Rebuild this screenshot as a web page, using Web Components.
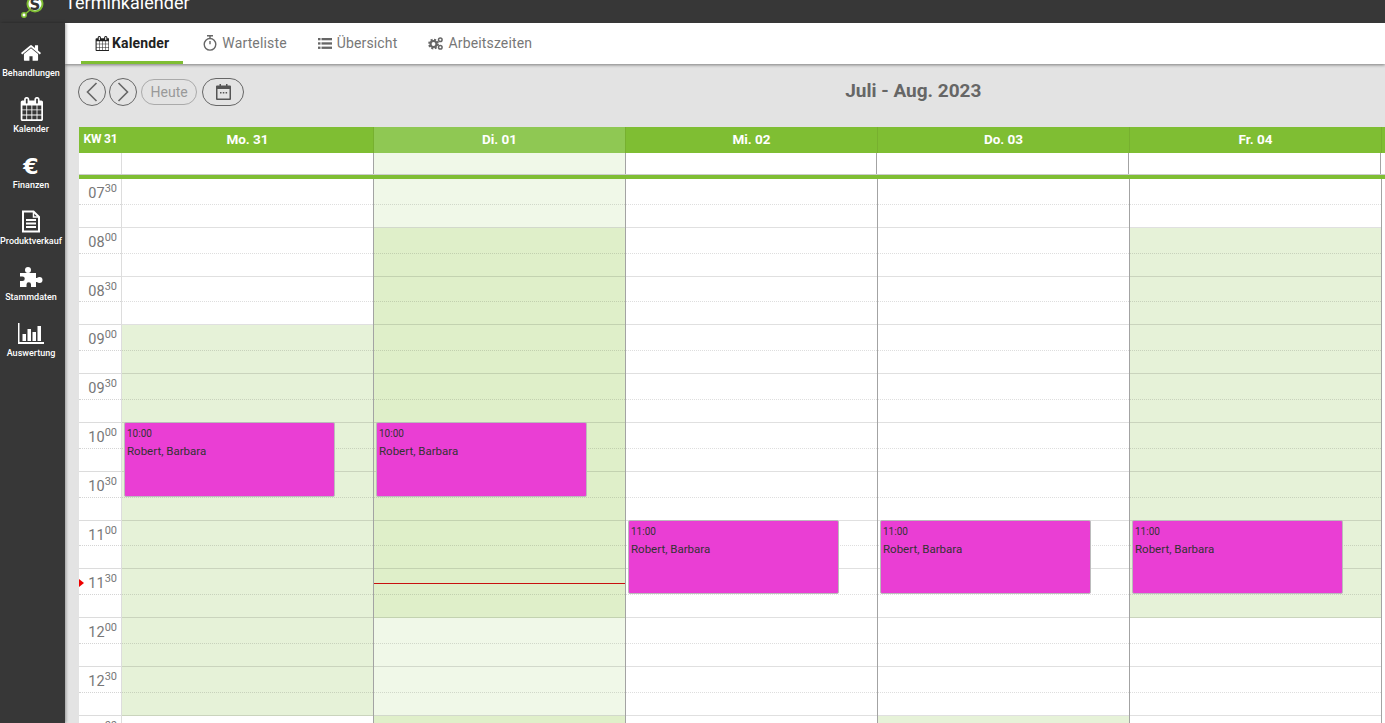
<!DOCTYPE html>
<html lang="de">
<head>
<meta charset="utf-8">
<title>Terminkalender</title>
<style>
  html, body { margin: 0; height: 100%; overflow: hidden; background: #e3e3e3; font-family: Roboto, "Liberation Sans", sans-serif; }
</style>
</head>
<body>
<app-shell></app-shell>
<script>
const CAL_PATH = 'M192 1664h288v-288h-288v288zm352 0h320v-288h-320v288zm-352-352h288v-320h-288v320zm352 0h320v-320h-320v320zm-352-384h288v-288h-288v288zm736 736h320v-288h-320v288zm-384-736h320v-288h-320v288zm768 736h288v-288h-288v288zm-384-352h320v-320h-320v320zm-352-864v-288q0-13-9.5-22.5t-22.5-9.5h-64q-13 0-22.5 9.5t-9.5 22.5v288q0 13 9.5 22.5t22.5 9.5h64q13 0 22.5-9.5t9.5-22.5zm736 864h288v-320h-288v320zm-384-384h320v-288h-320v288zm384 0h288v-288h-288v288zm32-480v-288q0-13-9.5-22.5t-22.5-9.5h-64q-13 0-22.5 9.5t-9.5 22.5v288q0 13 9.5 22.5t22.5 9.5h64q13 0 22.5-9.5t9.5-22.5zm384-64v1280q0 52-38 90t-90 38h-1408q-52 0-90-38t-38-90v-1280q0-52 38-90t90-38h128v-96q0-66 47-113t113-47h64q66 0 113 47t47 113v96h384v-96q0-66 47-113t113-47h64q66 0 113 47t47 113v96h128q52 0 90 38t38 90z';

const ICONS = {
  home: `<svg width="22" height="22" viewBox="0 0 1792 1792" fill="#fff"><path d="M1472 992v480q0 26-19 45t-45 19h-384v-384h-256v384h-384q-26 0-45-19t-19-45v-480q0-1 .5-3t.5-3l575-474 575 474q1 2 1 6zm223-69l-62 74q-8 9-21 11h-3q-13 0-21-7l-692-577-692 577q-12 8-24 7-13-2-21-11l-62-74q-8-10-7-23.5t11-21.5l719-599q32-26 76-26t76 26l244 204v-195q0-14 9-23t23-9h192q14 0 23 9t9 23v408l219 182q10 8 11 21.5t-7 23.5z"/></svg>`,
  calendar: `<svg width="24" height="24" viewBox="0 0 1664 1792" fill="#fff"><path d="${CAL_PATH}"/></svg>`,
  euro: `<span style="font:700 22px/22px 'DejaVu Sans',sans-serif;color:#fff">€</span>`,
  doc: `<svg width="20" height="23" viewBox="0 0 20 23" fill="none" stroke="#fff" stroke-width="2"><path d="M2 1.5h10.5l5.5 5.5v14.500h-16z"/><path d="M12.500 1.500v5.500h5.500" stroke-width="1.500"/><path d="M5 10h10M5 13.500h10M5 17h10" stroke-width="2"/></svg>`,
  puzzle: `<svg width="23" height="21" viewBox="0 0 23 21" fill="#fff"><circle cx="8" cy="3" r="3"/><path d="M0 6h16v5h3v4h-3v5h-5v-2.500a2.200 2.200 0 0 0-4.500 0v2.500h-6.500v-6h2.500a2.200 2.200 0 0 0 0-4.500h-2.500z"/><circle cx="19.500" cy="13" r="3"/></svg>`,
  chart: `<svg width="26" height="21" viewBox="0 0 26 21" fill="#fff"><path d="M0 0h1.500v19h24.500v2h-26z"/><rect x="4.500" y="11" width="3.500" height="7"/><rect x="9.500" y="6" width="3.500" height="12"/><rect x="14.500" y="9" width="3.500" height="9"/><rect x="19.500" y="3" width="3.500" height="15"/></svg>`
};

const TAB_ICONS = {
  calendar: `<svg width="14" height="15" viewBox="0 0 1664 1792" fill="#222"><path d="${CAL_PATH}"/></svg>`,
  watch: `<svg width="14" height="16" viewBox="0 0 14 16" fill="none" stroke="#666" stroke-width="1.400"><path d="M4 .8h6M7 .8v2.500"/><circle cx="7" cy="9.300" r="5.800"/><path d="M7 9.300v-3.300"/></svg>`,
  list: `<svg width="14" height="11" viewBox="0 0 14 11" fill="#666"><rect y="0" width="2.500" height="2.300"/><rect x="3.500" y="0" width="10.500" height="2.300"/><rect y="4.300" width="2.500" height="2.300"/><rect x="3.500" y="4.300" width="10.500" height="2.300"/><rect y="8.600" width="2.500" height="2.300"/><rect x="3.500" y="8.600" width="10.500" height="2.300"/></svg>`,
  cogs: `<svg width="15" height="13" viewBox="0 0 15 13" fill="none" stroke="#666"><circle cx="5.500" cy="7" r="4.200" stroke-width="2.400" stroke-dasharray="1.900 1.400"/><circle cx="5.500" cy="7" r="3" stroke-width="2.200"/><circle cx="12.300" cy="2.800" r="1.800" stroke-width="1.500"/><circle cx="12.300" cy="10.200" r="1.800" stroke-width="1.500"/></svg>`
};

class AppShell extends HTMLElement {
  constructor() {
    super();
    this.attachShadow({ mode: 'open' });
    this.shadowRoot.innerHTML = `
      <style>
        :host { display: flex; flex-direction: column; height: 723px; overflow: hidden; }
        .body { display: flex; flex: 1; min-height: 0; }
        .main { flex: 1; min-width: 0; display: flex; flex-direction: column; overflow: hidden; }
      </style>
      <top-bar></top-bar>
      <div class="body">
        <app-sidebar></app-sidebar>
        <div class="main">
          <cal-tabs></cal-tabs>
          <cal-toolbar></cal-toolbar>
          <cal-grid></cal-grid>
        </div>
      </div>`;
  }
}

class TopBar extends HTMLElement {
  constructor() {
    super();
    this.attachShadow({ mode: 'open' });
    this.shadowRoot.innerHTML = `
      <style>
        :host { display: flex; height: 23px; background: #373737; overflow: hidden; flex: none; }
        .logo { width: 65px; flex: none; }
        svg { display: block; }
        h1 { margin: -8px 0 0; font: 400 18px/22px Roboto, sans-serif; color: #fff; letter-spacing: .04px; }
      </style>
      <div class="logo">
        <svg width="65" height="23" viewBox="0 0 65 23">
          <path d="M24 15L30 10" stroke="#7fbe33" stroke-width="1.500"/>
          <circle cx="35" cy="4" r="7.500" fill="#fff" stroke="#7fbe33" stroke-width="2"/>
          <text x="35" y="9.500" text-anchor="middle" font-family="'DejaVu Sans',sans-serif" font-weight="700" font-size="15" fill="#333">S</text>
          <circle cx="24" cy="15" r="2.200" fill="#fff" stroke="#7fbe33" stroke-width="1.500"/>
        </svg>
      </div>
      <h1>Terminkalender</h1>`;
  }
}

class NavItem extends HTMLElement {
  constructor() {
    super();
    this.attachShadow({ mode: 'open' });
    this.shadowRoot.innerHTML = `
      <style>
        :host { display: flex; flex-direction: column; align-items: center; width: 62px; height: 56px; color: #fff; }
        .icon { height: 24px; margin-top: 2px; display: flex; align-items: center; justify-content: center; }
        .icon svg { display: block; }
        .label { font: 500 9px/11px Roboto, sans-serif; margin-top: 1px; white-space: nowrap; }
      </style>
      <div class="icon"><slot name="icon"></slot></div>
      <div class="label"><slot></slot></div>`;
  }
}

class AppSidebar extends HTMLElement {
  constructor() {
    super();
    this.attachShadow({ mode: 'open' });
    const items = [['home', 'Behandlungen'], ['calendar', 'Kalender'], ['euro', 'Finanzen'], ['doc', 'Produktverkauf'], ['puzzle', 'Stammdaten'], ['chart', 'Auswertung']];
    this.shadowRoot.innerHTML = `
      <style>
        :host { display: block; width: 65px; flex: none; background: #373737; padding-top: 18px; box-sizing: border-box; box-shadow: 1px 0 3px rgba(0,0,0,.35); position: relative; z-index: 2; }
      </style>
      ${items.map(([icon, label]) => `<nav-item><span slot="icon">${ICONS[icon]}</span>${label}</nav-item>`).join('')}`;
  }
}

class TabItem extends HTMLElement {
  constructor() {
    super();
    this.attachShadow({ mode: 'open' });
    this.shadowRoot.innerHTML = `
      <style>
        :host { display: flex; align-items: center; gap: 5px; height: 41px; box-sizing: border-box; padding: 2px 14px 0; border-bottom: 3px solid transparent; font: 400 14px Roboto, sans-serif; color: #777; letter-spacing: .15px; }
        :host([active]) { border-bottom-color: #7fbe33; font-weight: 700; color: #222; gap: 3px; margin-right: 3px; }
        ::slotted(svg) { display: block; }
      </style>
      <slot></slot>`;
  }
}

class CalTabs extends HTMLElement {
  constructor() {
    super();
    this.attachShadow({ mode: 'open' });
    this.shadowRoot.innerHTML = `
      <style>
        :host { display: flex; flex: none; height: 41px; background: #fff; padding-left: 16px; gap: 3px; box-shadow: 0 1px 3px rgba(0,0,0,.45); position: relative; z-index: 1; }
      </style>
      <tab-item active>${TAB_ICONS.calendar}Kalender</tab-item>
      <tab-item>${TAB_ICONS.watch}Warteliste</tab-item>
      <tab-item>${TAB_ICONS.list}Übersicht</tab-item>
      <tab-item>${TAB_ICONS.cogs}Arbeitszeiten</tab-item>`;
  }
}

class RoundButton extends HTMLElement {
  constructor() {
    super();
    this.attachShadow({ mode: 'open' });
    this.shadowRoot.innerHTML = `
      <style>
        :host { display: flex; align-items: center; justify-content: center; box-sizing: border-box; height: 28px; min-width: 28px; border: 1px solid #666; border-radius: 14px; color: #666; font: 400 14px Roboto, sans-serif; }
        :host([disabled]) { height: 26px; border-color: #aaa; color: #999; padding: 0 8.500px; border-radius: 13px; }
        :host([wide]) { width: 42px; }
        ::slotted(svg) { display: block; }
      </style>
      <slot></slot>`;
  }
}

class CalToolbar extends HTMLElement {
  constructor() {
    super();
    this.attachShadow({ mode: 'open' });
    this.shadowRoot.innerHTML = `
      <style>
        :host { display: flex; flex: none; align-items: center; height: 63px; box-sizing: border-box; padding: 0 0 7px 13px; gap: 3px; }
        h2 { margin: -4px 0 0 598px; font: 700 19px Roboto, sans-serif; color: #666; white-space: nowrap; }
      </style>
      <round-button><svg width="12" height="20" viewBox="0 0 12 20" fill="none" stroke="#666" stroke-width="1.600"><path d="M10.500 1L1.500 10l9 9"/></svg></round-button>
      <round-button><svg width="12" height="20" viewBox="0 0 12 20" fill="none" stroke="#666" stroke-width="1.600"><path d="M1.500 1l9 9-9 9"/></svg></round-button>
      <round-button disabled style="margin-left:1px">Heute</round-button>
      <round-button wide style="margin-left:2px"><svg width="15" height="16" viewBox="0 0 15 16"><path fill="#555" d="M1 1.500h2.500V0h1.500v1.500h5V0h1.500v1.500H14a1 1 0 0 1 1 1V15a1 1 0 0 1-1 1H1a1 1 0 0 1-1-1V2.500a1 1 0 0 1 1-1z"/><rect x="1.500" y="5" width="12" height="9.500" fill="#e3e3e3"/><rect x="4" y="8" width="1.500" height="1.500" fill="#555"/><rect x="6.800" y="8" width="1.500" height="1.500" fill="#555"/><rect x="9.600" y="8" width="1.500" height="1.500" fill="#555"/></svg></round-button>
      <h2>Juli - Aug. 2023</h2>`;
  }
}

class CalEvent extends HTMLElement {
  constructor() {
    super();
    this.attachShadow({ mode: 'open' });
    this.shadowRoot.innerHTML = `
      <style>
        :host { display: block; position: absolute; left: 2px; width: 211px; box-sizing: border-box; background: #ea3ed4; border: 1px solid #bbb; border-radius: 2px; padding: 5px 2px; color: #333; font-family: Roboto, sans-serif; z-index: 1; }
        .time { font-size: 10px; line-height: 12px; }
        .name { font-size: 11.500px; line-height: 13px; margin-top: 5px; }
      </style>
      <div class="time"><slot name="time"></slot></div>
      <div class="name"><slot></slot></div>`;
  }
}

class CalDay extends HTMLElement {
  constructor() {
    super();
    this.attachShadow({ mode: 'open' });
    this.shadowRoot.innerHTML = `
      <style>
        :host { display: block; position: relative; width: 252px; flex: none; box-sizing: border-box; border-right: 1px solid #a3a3a3; }
        .half { box-sizing: border-box; }
        .half.a { height: 25.800px; border-bottom: 1px dotted rgba(0,0,0,.13); }
        .half.b { height: 23px; border-bottom: 1px solid rgba(0,0,0,.12); }
      </style>
      <div id="rows"></div>
      <slot></slot>`;
  }

  setColors(colors) {
    this.shadowRoot.getElementById('rows').innerHTML = colors.map(c =>
      `<div class="half a" style="background:${c}"></div><div class="half b" style="background:${c}"></div>`).join('');
  }
}

class TimeColumn extends HTMLElement {
  constructor() {
    super();
    this.attachShadow({ mode: 'open' });
    const times = ['07 30', '08 00', '08 30', '09 00', '09 30', '10 00', '10 30', '11 00', '11 30', '12 00', '12 30', '13 00'];
    this.shadowRoot.innerHTML = `
      <style>
        :host { display: block; position: relative; width: 43px; flex: none; box-sizing: border-box; background: #fff; border-right: 1px solid #ddd; font-family: Roboto, sans-serif; color: #777; }
        .a { height: 25.800px; box-sizing: border-box; border-bottom: 1px dotted #d4d4d4; text-align: right; padding: 5px 4px 0 0; font-size: 14.500px; line-height: 20px; }
        .b { height: 23px; box-sizing: border-box; border-bottom: 1px solid #dcdcdc; }
        sup { font-size: 11px; line-height: 0; vertical-align: 6px; }
        .now { position: absolute; left: 0; top: 400px; width: 0; height: 0; border-left: 5px solid #e00; border-top: 4px solid transparent; border-bottom: 4px solid transparent; }
      </style>
      ${times.map(t => { const [h, m] = t.split(' '); return `<div class="a">${h}<sup>${m}</sup></div><div class="b"></div>`; }).join('')}
      <div class="now"></div>`;
  }
}

class CalGrid extends HTMLElement {
  constructor() {
    super();
    this.attachShadow({ mode: 'open' });
    const days = ['Mo. 31', 'Di. 01', 'Mi. 02', 'Do. 03', 'Fr. 04'];
    this.shadowRoot.innerHTML = `
      <style>
        :host { display: block; flex: 1; min-height: 0; margin-left: 14px; background: #fff; font-family: Roboto, sans-serif; }
        .head { display: flex; height: 26px; background: #7fbe33; color: #fff; font-weight: 700; line-height: 25px; text-align: center; }
        .kw { width: 43px; flex: none; font-size: 12px; box-sizing: border-box; letter-spacing: -.2px; }
        .d { width: 252px; flex: none; font-size: 13.500px; box-sizing: border-box; border-right: 1px solid #77b02f; }
        .d.today { background: #8fc853; }
        .allday { display: flex; height: 22px; box-sizing: border-box; border-bottom: 1px solid #ccc; }
        .allday .t { width: 43px; flex: none; box-sizing: border-box; border-right: 1px solid #ddd; }
        .allday .c { width: 251.750px; flex: none; box-sizing: border-box; border-right: 1px solid #a3a3a3; }
        .allday .c.today { background: #f0f8e8; }
        .bar { height: 4px; background: #7fbe33; }
        .cols { display: flex; }
        .line { position: absolute; left: 0; right: 0; top: 404px; height: 1px; background: #c8100f; }
      </style>
      <div class="head">
        <div class="kw">KW 31</div>
        ${days.map((d, i) => `<div class="d${i === 1 ? ' today' : ''}">${d}</div>`).join('')}
      </div>
      <div class="allday">
        <div class="t"></div>
        ${days.map((d, i) => `<div class="c${i === 1 ? ' today' : ''}"></div>`).join('')}
      </div>
      <div class="bar"></div>
      <div class="cols">
        <time-column></time-column>
        <cal-day id="d0"><cal-event style="top:243px;height:75px"><span slot="time">10:00</span>Robert, Barbara</cal-event></cal-day>
        <cal-day id="d1"><cal-event style="top:243px;height:75px"><span slot="time">10:00</span>Robert, Barbara</cal-event><div class="line"></div></cal-day>
        <cal-day id="d2"><cal-event style="top:341px;height:74px"><span slot="time">11:00</span>Robert, Barbara</cal-event></cal-day>
        <cal-day id="d3"><cal-event style="top:341px;height:74px"><span slot="time">11:00</span>Robert, Barbara</cal-event></cal-day>
        <cal-day id="d4"><cal-event style="top:341px;height:74px"><span slot="time">11:00</span>Robert, Barbara</cal-event></cal-day>
      </div>`;

    const W = '#fff', G = '#e6f2d8', L = '#f0f8e8', D = '#dfefc9';
    const rows = {
      d0: [W, W, W, G, G, G, G, G, G, G, G, W],
      d1: [L, D, D, D, D, D, D, D, D, L, L, D],
      d2: Array(12).fill(W),
      d3: [W, W, W, W, W, W, W, W, W, W, W, G],
      d4: [W, G, G, G, G, G, G, G, G, W, W, W]
    };
    Object.keys(rows).forEach(id => this.shadowRoot.getElementById(id).setColors(rows[id]));
  }
}

customElements.define('cal-event', CalEvent);
customElements.define('cal-day', CalDay);
customElements.define('time-column', TimeColumn);
customElements.define('cal-grid', CalGrid);
customElements.define('round-button', RoundButton);
customElements.define('cal-toolbar', CalToolbar);
customElements.define('tab-item', TabItem);
customElements.define('cal-tabs', CalTabs);
customElements.define('nav-item', NavItem);
customElements.define('app-sidebar', AppSidebar);
customElements.define('top-bar', TopBar);
customElements.define('app-shell', AppShell);
</script>
</body>
</html>
